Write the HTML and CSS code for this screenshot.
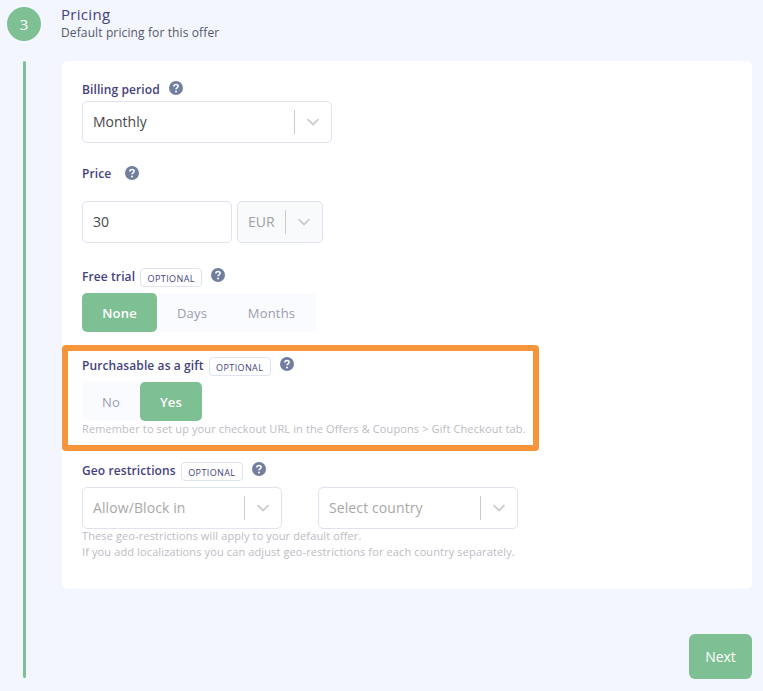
FILE: index.html
```html
<!DOCTYPE html>
<html lang="en">
<head>
<meta charset="utf-8">
<title>Pricing</title>
<link rel="stylesheet" href="styles.css">
</head>
<body>
<svg class="defs" width="0" height="0" aria-hidden="true">
  <symbol id="help" viewBox="0 0 14 14">
    <circle cx="7" cy="7" r="7" fill="#717e9f"/>
    <path d="M4.9 5.5C4.9 4.3 5.800 3.500 7 3.500s2.100.8 2.100 1.800c0 1.500-2.100 1.500-2.100 3" fill="none" stroke="#fff" stroke-width="1.600"/>
    <circle cx="7" cy="10.400" r="1" fill="#fff"/>
  </symbol>
  <symbol id="chev" viewBox="0 0 14 8">
    <path d="M1.500 1.200 7 6.400l5.500-5.200" fill="none" stroke="#ccc" stroke-width="1.800"/>
  </symbol>
</svg>
<header class="step">
  <div class="step-num">3</div>
  <div class="step-text">
    <h2 class="step-title">Pricing</h2>
    <p class="step-sub">Default pricing for this offer</p>
  </div>
</header>
<div class="step-body">
  <div class="rail"></div>
  <div class="content">
    <main class="card">
      <section class="field f-billing">
        <div class="label-row"><span class="label">Billing period</span><svg class="help"><use href="#help"/></svg></div>
        <div class="select w250">
          <span class="sel-value">Monthly</span>
          <span class="sel-sep"></span>
          <svg class="chev"><use href="#chev"/></svg>
        </div>
      </section>
      <section class="field f-price">
        <div class="label-row"><span class="label">Price</span><svg class="help help-wide"><use href="#help"/></svg></div>
        <div class="price-row">
          <div class="input">30</div>
          <div class="select currency">
            <span class="sel-value">EUR</span>
            <span class="sel-sep"></span>
            <svg class="chev"><use href="#chev"/></svg>
          </div>
        </div>
      </section>
      <section class="field f-trial">
        <div class="label-row"><span class="label">Free trial</span><span class="opt">OPTIONAL</span><svg class="help"><use href="#help"/></svg></div>
        <div class="tabs">
          <span class="tab active t-none">None</span>
          <span class="tab t-days">Days</span>
          <span class="tab t-months">Months</span>
        </div>
      </section>
      <section class="gift">
        <div class="label-row"><span class="label">Purchasable as a gift</span><span class="opt">OPTIONAL</span><svg class="help"><use href="#help"/></svg></div>
        <div class="tabs">
          <span class="tab t-no">No</span>
          <span class="tab active t-yes">Yes</span>
        </div>
        <p class="hint">Remember to set up your checkout URL in the Offers &amp; Coupons &gt; Gift Checkout tab.</p>
      </section>
      <section class="field f-geo">
        <div class="label-row"><span class="label">Geo restrictions</span><span class="opt">OPTIONAL</span><svg class="help"><use href="#help"/></svg></div>
        <div class="geo-row">
          <div class="select w200"><span class="sel-value ph">Allow/Block in</span><span class="sel-sep"></span><svg class="chev"><use href="#chev"/></svg></div>
          <div class="select w200"><span class="sel-value ph">Select country</span><span class="sel-sep"></span><svg class="chev"><use href="#chev"/></svg></div>
        </div>
        <p class="hint">These geo-restrictions will apply to your default offer.<br>If you add localizations you can adjust geo-restrictions for each country separately.</p>
      </section>
    </main>
    <div class="actions"><button class="next" type="button">Next</button></div>
  </div>
</div>
</body>
</html>
```
FILE: styles.css
```css
* { box-sizing: border-box; }
html, body { height: 100%; }
body {
  margin: 0;
  background: #f3f6fe;
  font-family: "Open Sans", "Liberation Sans", sans-serif;
  color: #484848;
  overflow: hidden;
}
.defs { position: absolute; }
.step { display: flex; padding: 7px 0 0 7px; height: 61px; }
.step-num {
  width: 34px; height: 34px; border-radius: 50%;
  background: #7fbf94; color: #fff;
  font-size: 15px; line-height: 34px; text-align: center;
}
.step-text { margin-left: 20px; margin-top: -2px; }
.step-title { margin: 0 0 1px; font-size: 15px; line-height: 18px; font-weight: 500; color: #44427e; letter-spacing: .3px; }
.step-sub { margin: 0; font-size: 12px; line-height: 18px; color: #55586a; letter-spacing: .12px; }
.step-body { display: flex; padding-left: 23px; }
.rail { width: 3px; height: 617px; background: #7fbf94; border-radius: 2px; }
.content { margin-left: 36px; width: 690px; }
.card {
  height: 528px;
  background: #fff;
  border-radius: 6px;
  padding-top: 19px;
}
.field { padding-left: 20px; }
.label-row { display: flex; align-items: center; height: 18px; }
.label { font-size: 12px; font-weight: 600; color: #44427e; letter-spacing: .1px; }
.help { width: 14px; height: 14px; margin-left: 9px; margin-top: -3px; flex: none; }
.f-price .help { margin-left: 14px; margin-top: -1px; }
.opt {
  margin-left: 5px; height: 19px; padding: 0 6.500px;
  border: 1px solid #dfe3ef; border-radius: 4px;
  font-size: 9px; line-height: 19px; font-weight: 500; letter-spacing: .4px; color: #44427e;
  background: #fff; margin-top: 2px;
}
.select {
  display: flex; align-items: center; height: 42px;
  border: 1px solid #dfe3ef; border-radius: 5px; background: #fff;
  padding: 0 11px 0 10px;
  font-size: 14px; color: #484848;
}
.sel-value { flex: 1; padding-bottom: 2px; }
.sel-value.ph { color: #a8a8a8; letter-spacing: .1px; }
.sel-sep { width: 1px; height: 24px; background: #ccc; margin-right: 11px; }
.chev { width: 14px; height: 8px; }
.w250 { width: 250px; margin-top: 3px; }
.w200 { width: 200px; }
.f-price { margin-top: 21px; }
.price-row { display: flex; gap: 5px; margin-top: 19px; }
.input {
  width: 150px; height: 42px; border: 1px solid #dfe3ef; border-radius: 5px;
  padding: 0 10px; font-size: 14px; line-height: 40px; color: #484848;
}
.currency { width: 86px; background: #f9fafb; color: #a0a0a0; }
.f-trial { margin-top: 24px; }
.tabs {
  display: flex; height: 39px; background: #fafbfe; border-radius: 5px;
  font-size: 13px; font-weight: 500; color: #9a9db2; letter-spacing: .2px;
}
.f-trial .tabs { width: 234px; margin-top: 8px; }
.tab { display: flex; align-items: center; justify-content: center; }
.tab.active { background: #7fbf94; color: #fff; border-radius: 5px; font-weight: 600; }
.t-none { width: 75px; }
.t-days { width: 70px; }
.t-months { width: 89px; }
.t-no { width: 58px; }
.t-yes { width: 62px; }
.gift {
  width: 477px; height: 106px; margin-top: 13px;
  border: 6px solid #f7953a; border-radius: 4px;
  padding: 5px 0 0 14px;
}
.gift .tabs { width: 120px; margin-top: 8px; }
.hint { margin: 0; font-size: 11px; line-height: 16px; color: #bcbcc4; letter-spacing: .12px; }
.f-geo { margin-top: 10px; }
.geo-row { display: flex; gap: 36px; margin-top: 8px; }
.f-geo .hint { margin-top: -1px; }
.actions { display: flex; justify-content: flex-end; margin-top: 45px; }
.next {
  width: 63px; height: 45px; border: 0; border-radius: 6px;
  background: #7fbf94; color: #fff;
  font-family: inherit; font-size: 14px;
}
```
